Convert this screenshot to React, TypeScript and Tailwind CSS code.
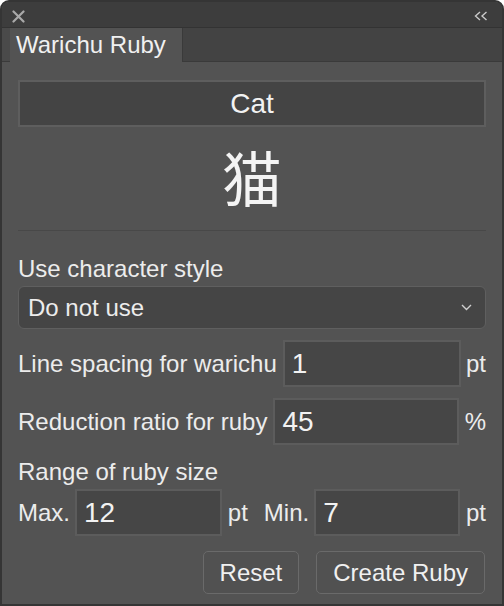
import React from 'react';

const font = "font-['Liberation_Sans','Arimo',Arial,sans-serif]";

function NumField({ value, className }: { value: string; className?: string }) {
  return (
    <div
      className={`h-[47px] border-2 border-[#5c5c5c] bg-[#464646] flex items-center pl-[7px] text-[28px] leading-none text-[#f2f2f2] ${className ?? ''}`}
    >
      {value}
    </div>
  );
}

export default function App() {
  return (
    <div className="w-[504px] h-[606px] bg-white">
      <div
        className={`w-[504px] h-[606px] flex flex-col overflow-hidden rounded-t-[9px] border-2 border-[#353535] bg-[#535353] text-[#ececec] ${font}`}
      >
        {/* title bar */}
        <div className="h-[26px] shrink-0 bg-[#3d3d3d] border-b border-[#333333] flex items-center justify-between pl-[10px] pr-[14px]">
          <svg width="13" height="13" viewBox="0 0 13 13" className="mt-[3px]">
            <path d="M1.5 1.5 L11.5 11.5 M11.5 1.5 L1.5 11.5" stroke="#a9a9a9" strokeWidth="2.2" strokeLinecap="round" />
          </svg>
          <svg width="14" height="10" viewBox="0 0 14 10" className="mt-[3px]">
            <path d="M6 1 L1.5 5 L6 9 M12.5 1 L8 5 L12.5 9" stroke="#c9c9c9" strokeWidth="1.4" fill="none" />
          </svg>
        </div>

        {/* tab bar */}
        <div className="h-[34px] shrink-0 bg-[#434343] flex">
          <div className="w-[8px] bg-[#4a4a4a] border-b border-[#3a3a3a]" />
          <div className="w-[173px] bg-[#535353] border-r border-[#3a3a3a] pl-[6px] flex items-center text-[24px] leading-none text-[#f0f0f0]">
            Warichu Ruby
          </div>
          <div className="flex-1 border-b border-[#3a3a3a]" />
        </div>

        {/* content */}
        <div className="flex-1 flex flex-col px-[16px]">
          <div className="mt-[18px] h-[47px] border-2 border-[#5e5e5e] bg-[#444444] flex items-center justify-center text-[28px] leading-none text-[#f2f2f2]">
            Cat
          </div>

          <div className="mt-[19px] h-[60px] flex items-center justify-center text-[60px] leading-none text-[#f4f4f4] font-['Noto_Sans_CJK_JP',sans-serif]">
            猫
          </div>

          <div className="mt-[24px] h-px bg-[#484848]" />

          <div className="mt-[24px] text-[24px] leading-[28px]">Use character style</div>

          <div className="mt-[3px] h-[43px] rounded-[6px] border border-[#5f5f5f] bg-[#454545] flex items-center justify-between pl-[9px] pr-[13px] text-[24px] leading-none">
            <span>Do not use</span>
            <svg width="11" height="7" viewBox="0 0 11 7">
              <path d="M1 1 L5.5 5.5 L10 1" stroke="#cfcfcf" strokeWidth="1.4" fill="none" />
            </svg>
          </div>

          <div className="mt-[11px] flex items-center text-[24px] leading-none">
            <span>Line spacing for warichu</span>
            <NumField value="1" className="flex-1 ml-[6px]" />
            <span className="w-[25px] text-right">pt</span>
          </div>

          <div className="mt-[11px] flex items-center text-[24px] leading-none">
            <span>Reduction ratio for ruby</span>
            <NumField value="45" className="flex-1 ml-[6px]" />
            <span className="w-[27px] text-right">%</span>
          </div>

          <div className="mt-[13px] text-[24px] leading-[28px]">Range of ruby size</div>

          <div className="mt-[3px] flex items-center text-[24px] leading-none">
            <span>Max.</span>
            <NumField value="12" className="w-[147px] ml-[5px] h-[46px]" />
            <span className="ml-[6px]">pt</span>
            <span className="ml-[16px]">Min.</span>
            <NumField value="7" className="w-[146px] ml-[5px] h-[46px]" />
            <span className="ml-[6px]">pt</span>
          </div>

          <div className="mt-[15px] flex justify-end gap-[17px] pr-[1px]">
            <button className="h-[43px] px-[16px] rounded-[5px] border border-[#6a6a6a] bg-[#515151] text-[24px] leading-none text-[#f0f0f0]">
              Reset
            </button>
            <button className="h-[43px] px-[16px] rounded-[5px] border border-[#6a6a6a] bg-[#515151] text-[24px] leading-none text-[#f0f0f0]">
              Create Ruby
            </button>
          </div>
        </div>
      </div>
    </div>
  );
}
